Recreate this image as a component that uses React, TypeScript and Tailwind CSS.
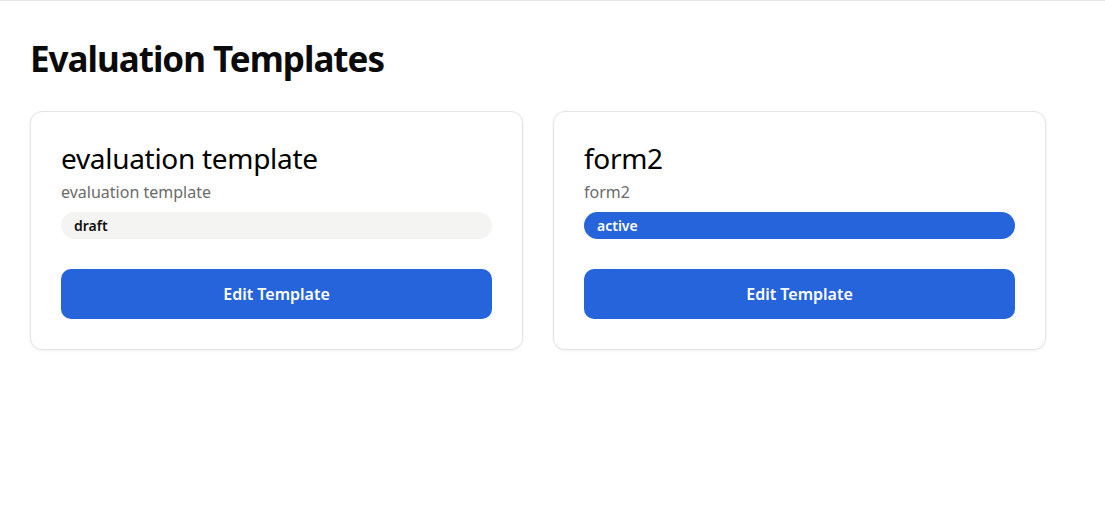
const templates = [
  { name: 'evaluation template', description: 'evaluation template', status: 'draft' },
  { name: 'form2', description: 'form2', status: 'active' },
];

function TemplateCard({ name, description, status }: { name: string; description: string; status: string }) {
  const isActive = status === 'active';
  return (
    <div className="w-[493px] rounded-xl border border-[#e3e3e3] bg-white px-[30px] pt-[29px] pb-[30px] shadow-[0_1px_3px_rgba(0,0,0,0.06)]">
      <h2 className="text-[28px] leading-[34px] font-normal tracking-[-0.3px] text-black">{name}</h2>
      <p className="mt-[7px] text-[16px] leading-[21px] text-[#6b6b6b]">{description}</p>
      <div
        className={`mt-[9px] flex h-[27px] items-center rounded-full px-[13px] text-[14px] font-semibold ${
          isActive ? 'bg-[#2664dc] text-white' : 'bg-[#f4f4f2] text-[#111]'
        }`}
      >
        {status}
      </div>
      <button className="mt-[30px] flex h-[50px] w-full items-center justify-center rounded-[10px] bg-[#2664dc] text-[16px] font-semibold text-white">
        Edit Template
      </button>
    </div>
  );
}

export default function App() {
  return (
    <div className="min-h-[532px] border-t border-[#e5e5e5] bg-white font-['Noto_Sans','Open_Sans',sans-serif]">
      <div className="px-[30px] pt-[34px]">
        <h1 className="text-[35px] leading-[48px] font-bold tracking-[-1px] text-[#0a0a0a]">Evaluation Templates</h1>
        <div className="mt-[28px] flex gap-[30px]">
          {templates.map((t) => (
            <TemplateCard key={t.name} {...t} />
          ))}
        </div>
      </div>
    </div>
  );
}
